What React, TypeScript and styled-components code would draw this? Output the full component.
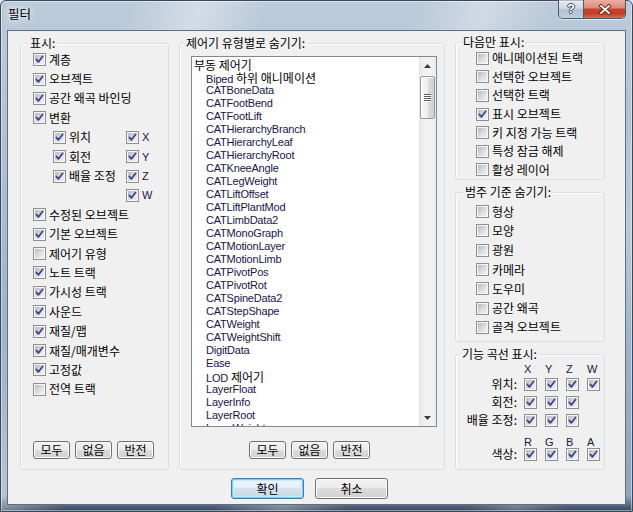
import React from "react";
import styled, { createGlobalStyle, css } from "styled-components";

const KO = `"Noto Sans CJK KR", "Noto Sans", sans-serif`;
const LATIN = `"Liberation Sans", "Noto Sans CJK KR", sans-serif`;

const GlobalStyle = createGlobalStyle`
  * { box-sizing: border-box; }
  html, body { margin: 0; padding: 0; }
  body {
    width: 633px;
    height: 512px;
    overflow: hidden;
    background: #dfe6ee;
    font-family: ${KO};
    font-size: 12px;
    color: #000;
  }
`;

const Window = styled.div`
  width: 633px;
  height: 512px;
  display: flex;
  flex-direction: column;
  padding: 0 6px 6px;
  border: 1px solid #3a4859;
  border-radius: 6px 6px 0 0;
  background:
    linear-gradient(112deg, rgba(255,255,255,0) 16%, rgba(255,255,255,.35) 24%, rgba(255,255,255,0) 32%,
      rgba(255,255,255,0) 50%, rgba(255,255,255,.3) 58%, rgba(255,255,255,0) 66%,
      rgba(255,255,255,0) 80%, rgba(255,255,255,.22) 86%, rgba(255,255,255,0) 92%),
    linear-gradient(180deg, #bccbda 0%, #aabdd0 40%, #8ea5bc 97%, #34465c 100%);
  box-shadow: inset 0 0 0 1px rgba(255,255,255,.45);
`;

const TitleBar = styled.div`
  height: 29px;
  flex: none;
  display: flex;
  align-items: flex-start;
  justify-content: space-between;
`;

const Title = styled.span`
  margin: 5px 0 0 1px;
  font-size: 12.5px;
  line-height: 16px;
  text-shadow: 0 0 5px #fff, 0 0 9px rgba(255,255,255,.9);
`;

const CaptionGroup = styled.div`
  display: flex;
  margin: -1px 0 0 0;
  border: 1px solid #4b5b6e;
  border-top: none;
  border-radius: 0 0 5px 5px;
  overflow: hidden;
  box-shadow: 0 1px 0 rgba(255,255,255,.55);
`;

const HelpButton = styled.div`
  width: 25px;
  height: 18px;
  display: grid;
  place-items: center;
  border-right: 1px solid #4b5b6e;
  background: linear-gradient(180deg, rgba(255,255,255,.6) 0%, rgba(226,233,241,.55) 45%,
    rgba(168,185,204,.6) 55%, rgba(196,210,224,.65) 100%);
  color: #fff;
  font: bold 13px/14px "Liberation Sans", sans-serif;
  text-shadow: -1px 0 #3e4c5e, 1px 0 #3e4c5e, 0 -1px #3e4c5e, 0 1px #3e4c5e;
`;

const CloseButton = styled.div`
  width: 41px;
  height: 18px;
  display: grid;
  place-items: center;
  background: linear-gradient(180deg, #eab0a2 0%, #de8b78 42%, #c8432b 52%, #c23d25 75%, #d8714f 100%);
`;

const Client = styled.div`
  flex: 1;
  display: flex;
  flex-direction: column;
  background: #f0f0f0;
  border: 1px solid #5f6f82;
`;

const Columns = styled.div`
  height: 439px;
  flex: none;
  display: grid;
  grid-template-columns: 149px 266px 150px;
  column-gap: 10px;
  padding: 12px 0 0 12px;
`;

const GroupBox = styled.div<{ $h?: number }>`
  display: flex;
  flex-direction: column;
  min-height: 0;
  border: 1px solid #d5dfe5;
  border-radius: 3px;
  box-shadow: inset 1px 1px 0 #fff;
  ${p => p.$h ? css`height: ${p.$h}px; flex: none;` : css`flex: 1;`}
`;

const Legend = styled.div<{ $indent: number }>`
  align-self: flex-start;
  margin: -8px 0 0 ${p => p.$indent}px;
  padding: 0 2px;
  background: #f0f0f0;
  font-size: 12px;
  line-height: 14px;
  white-space: nowrap;
`;

const GroupBody = styled.div<{ $pad: string }>`
  flex: 1;
  display: flex;
  flex-direction: column;
  min-height: 0;
  padding: ${p => p.$pad};
`;

const CheckRow = styled.div<{ $h: number }>`
  display: flex;
  align-items: center;
  height: ${p => p.$h}px;
`;

const CheckItem = styled.span`
  display: flex;
  align-items: center;
`;

const BoxFrame = styled.span`
  position: relative;
  flex: none;
  width: 13px;
  height: 13px;
  border: 1px solid #8e8f8f;
  background: #f6f6f6;
  &::before {
    content: "";
    position: absolute;
    left: 1px;
    top: 1px;
    width: 9px;
    height: 9px;
    background: linear-gradient(135deg, #b8bbc0 0%, #d9dadd 50%, #f4f4f4 100%);
  }
  svg {
    position: absolute;
    left: 0;
    top: 0;
  }
`;

const Label = styled.span<{ $latin?: boolean }>`
  margin-left: 3px;
  white-space: nowrap;
  font-size: 12px;
  line-height: 14px;
  ${p => p.$latin && css`
    font-family: ${LATIN};
    font-size: 11px;
    color: #16164a;
  `}
`;

const TransformGrid = styled.div`
  display: grid;
  grid-template-columns: 73px auto;
  grid-auto-rows: 19.4px;
  align-items: center;
  padding-left: 20px;
`;

const ButtonRow = styled.div<{ $indent: number }>`
  display: flex;
  gap: 5px;
  margin-top: auto;
  padding-left: ${p => p.$indent}px;
`;

const PushButton = styled.div<{ $w: number; $h: number; $primary?: boolean }>`
  width: ${p => p.$w}px;
  height: ${p => p.$h}px;
  display: grid;
  place-items: center;
  border: 1px solid #707070;
  border-radius: 3px;
  background: linear-gradient(180deg, #f2f2f2 0%, #ebebeb 49%, #dddddd 50%, #cfcfcf 100%);
  box-shadow: inset 0 0 0 1px #fbfbfb;
  font-size: 12px;
  line-height: 14px;
  ${p => p.$primary && css`
    border-color: #3c7fb1;
    box-shadow: inset 0 0 0 1px #6fd0fb, inset 0 0 0 2px #c4ecfd;
    background: linear-gradient(180deg, #eef5f9 0%, #e4eef4 49%, #d3e2eb 50%, #c7d9e4 100%);
  `}
`;

const ListBox = styled.div`
  height: 371px;
  margin-top: 6px;
  display: flex;
  background: #fff;
  border: 1px solid #828790;
`;

const ListItems = styled.div`
  flex: 1;
  overflow: hidden;
  padding: 1px 0 0 2px;
`;

const ListItem = styled.div<{ $child?: boolean }>`
  height: 13px;
  line-height: 13px;
  white-space: nowrap;
  padding-left: ${p => (p.$child ? 12 : 0)}px;
  font-family: ${LATIN};
  font-size: 11px;
  letter-spacing: -0.2px;
  color: #16164a;
`;

const Ko = styled.span`
  font-family: ${KO};
  font-size: 12px;
  line-height: 13px;
  letter-spacing: 0;
  color: #000;
`;

const ScrollBar = styled.div`
  width: 17px;
  flex: none;
  display: flex;
  flex-direction: column;
  background: linear-gradient(90deg, #e3e4e5 0%, #efefef 20%, #f3f3f3 70%, #ececec 100%);
`;

const ArrowButton = styled.div`
  height: 17px;
  flex: none;
  display: grid;
  place-items: center;
`;

const Track = styled.div`
  flex: 1;
  padding: 2px 1px 0 1px;
`;

const Thumb = styled.div`
  height: 43px;
  display: grid;
  place-items: center;
  border: 1px solid #979797;
  border-radius: 2px;
  background: linear-gradient(90deg, #f6f6f6 0%, #ededed 50%, #dcdcdc 51%, #d0d0d0 100%);
  box-shadow: inset 1px 1px 0 #fff;
`;

const RightColumn = styled.div`
  display: flex;
  flex-direction: column;
  margin-top: -1px;
  gap: 12px;
  min-height: 0;
`;

const AxisGrid = styled.div<{ $rows: string; $top: number }>`
  display: grid;
  grid-template-columns: 64px repeat(4, 21px);
  grid-template-rows: ${p => p.$rows};
  align-items: center;
  margin-top: ${p => p.$top}px;
`;

const AxisName = styled.span`
  justify-self: end;
  padding-right: 3px;
  font-size: 12px;
  line-height: 14px;
  white-space: nowrap;
`;

const AxisHead = styled.span`
  justify-self: start;
  padding-left: 4px;
  font-family: ${LATIN};
  font-size: 11px;
  line-height: 12px;
  color: #16164a;
`;

const AxisCell = styled.span`
  justify-self: center;
  display: flex;
`;

const Footer = styled.div`
  display: flex;
  gap: 11px;
  padding: 8px 0 0 223px;
`;

function Checkbox({ checked }: { checked?: boolean }) {
  return (
    <BoxFrame>
      {checked && (
        <svg width="11" height="11" viewBox="0 0 11 11">
          <path d="M2.3 5.4 L4.4 7.9 L8.7 2.3" fill="none" stroke="#33468e" strokeWidth="1.7" strokeLinecap="round" strokeLinejoin="round" />
        </svg>
      )}
    </BoxFrame>
  );
}

function Check({ label, checked, latin }: { label: string; checked?: boolean; latin?: boolean }) {
  return (
    <CheckItem>
      <Checkbox checked={checked} />
      <Label $latin={latin}>{label}</Label>
    </CheckItem>
  );
}

function MixedText({ text }: { text: string }) {
  const parts = text.split(/([\uac00-\ud7a3]+(?:\s+[\uac00-\ud7a3]+)*)/);
  return (
    <>
      {parts.map((part, i) => /[\uac00-\ud7a3]/.test(part) ? <Ko key={i}>{part}</Ko> : part)}
    </>
  );
}

const topItems: [string, boolean][] = [
  ["계층", true],
  ["오브젝트", true],
  ["공간 왜곡 바인딩", true],
  ["변환", true],
];

const bottomItems: [string, boolean][] = [
  ["수정된 오브젝트", true],
  ["기본 오브젝트", true],
  ["제어기 유형", false],
  ["노트 트랙", true],
  ["가시성 트랙", true],
  ["사운드", true],
  ["재질/맵", true],
  ["재질/매개변수", true],
  ["고정값", true],
  ["전역 트랙", false],
];

const controllers = [
  "Biped 하위 애니메이션", "CATBoneData", "CATFootBend", "CATFootLift", "CATHierarchyBranch",
  "CATHierarchyLeaf", "CATHierarchyRoot", "CATKneeAngle", "CATLegWeight", "CATLiftOffset",
  "CATLiftPlantMod", "CATLimbData2", "CATMonoGraph", "CATMotionLayer", "CATMotionLimb",
  "CATPivotPos", "CATPivotRot", "CATSpineData2", "CATStepShape", "CATWeight", "CATWeightShift",
  "DigitData", "Ease", "LOD 제어기", "LayerFloat", "LayerInfo", "LayerRoot", "LayerWeight",
];

const showOnly: [string, boolean][] = [
  ["애니메이션된 트랙", false],
  ["선택한 오브젝트", false],
  ["선택한 트랙", false],
  ["표시 오브젝트", true],
  ["키 지정 가능 트랙", false],
  ["특성 잠금 해제", false],
  ["활성 레이어", false],
];

const categories = ["형상", "모양", "광원", "카메라", "도우미", "공간 왜곡", "골격 오브젝트"];

function AxisRow({ name, count }: { name: string; count: number }) {
  return (
    <>
      <AxisName>{name}</AxisName>
      {[0, 1, 2, 3].map(i => (
        <AxisCell key={i}>{i < count && <Checkbox checked />}</AxisCell>
      ))}
    </>
  );
}

export default function App() {
  return (
    <>
      <GlobalStyle />
      <Window>
        <TitleBar>
          <Title>필터</Title>
          <CaptionGroup>
            <HelpButton>?</HelpButton>
            <CloseButton>
              <svg width="14" height="11" viewBox="0 0 14 11">
                <path d="M3 2 L11 9 M11 2 L3 9" stroke="#5b2219" strokeWidth="3.6" strokeLinecap="square" />
                <path d="M3 2 L11 9 M11 2 L3 9" stroke="#fff" strokeWidth="1.8" strokeLinecap="square" />
              </svg>
            </CloseButton>
          </CaptionGroup>
        </TitleBar>

        <Client>
          <Columns>
            <GroupBox>
              <Legend $indent={7}>표시:</Legend>
              <GroupBody $pad="0 0 10px 12px">
                {topItems.map(([label, checked]) => (
                  <CheckRow key={label} $h={19.4}>
                    <Check label={label} checked={checked} />
                  </CheckRow>
                ))}
                <TransformGrid>
                  <Check label="위치" checked />
                  <Check label="X" checked latin />
                  <Check label="회전" checked />
                  <Check label="Y" checked latin />
                  <Check label="배율 조정" checked />
                  <Check label="Z" checked latin />
                  <span />
                  <Check label="W" checked latin />
                </TransformGrid>
                {bottomItems.map(([label, checked]) => (
                  <CheckRow key={label} $h={19.4}>
                    <Check label={label} checked={checked} />
                  </CheckRow>
                ))}
                <ButtonRow $indent={-1}>
                  <PushButton $w={37} $h={18}>모두</PushButton>
                  <PushButton $w={37} $h={18}>없음</PushButton>
                  <PushButton $w={37} $h={18}>반전</PushButton>
                </ButtonRow>
              </GroupBody>
            </GroupBox>

            <GroupBox>
              <Legend $indent={4}>제어기 유형별로 숨기기:</Legend>
              <GroupBody $pad="0 7px 10px 11px">
                <ListBox>
                  <ListItems>
                    <ListItem><Ko>부동 제어기</Ko></ListItem>
                    {controllers.map(name => (
                      <ListItem key={name} $child><MixedText text={name} /></ListItem>
                    ))}
                  </ListItems>
                  <ScrollBar>
                    <ArrowButton>
                      <svg width="7" height="4" viewBox="0 0 7 4"><path d="M0 4 L3.5 0 L7 4 Z" fill="#3c3c3c" /></svg>
                    </ArrowButton>
                    <Track>
                      <Thumb>
                        <svg width="7" height="8" viewBox="0 0 7 8">
                          {[0, 2, 4, 6].map(y => (
                            <g key={y}>
                              <rect x="0" y={y} width="7" height="1" fill="#5d5d5d" />
                              <rect x="0" y={y + 1} width="7" height="1" fill="#ffffff" />
                            </g>
                          ))}
                        </svg>
                      </Thumb>
                    </Track>
                    <ArrowButton>
                      <svg width="7" height="4" viewBox="0 0 7 4"><path d="M0 0 L7 0 L3.5 4 Z" fill="#3c3c3c" /></svg>
                    </ArrowButton>
                  </ScrollBar>
                </ListBox>
                <ButtonRow $indent={58}>
                  <PushButton $w={37} $h={18}>모두</PushButton>
                  <PushButton $w={37} $h={18}>없음</PushButton>
                  <PushButton $w={37} $h={18}>반전</PushButton>
                </ButtonRow>
              </GroupBody>
            </GroupBox>

            <RightColumn>
              <GroupBox $h={138}>
                <Legend $indent={5}>다음만 표시:</Legend>
                <GroupBody $pad="0 0 0 20px">
                  {showOnly.map(([label, checked]) => (
                    <CheckRow key={label} $h={18.8}>
                      <Check label={label} checked={checked} />
                    </CheckRow>
                  ))}
                </GroupBody>
              </GroupBox>

              <GroupBox $h={150}>
                <Legend $indent={7}>범주 기준 숨기기:</Legend>
                <GroupBody $pad="3px 0 0 20px">
                  {categories.map(label => (
                    <CheckRow key={label} $h={19.3}>
                      <Check label={label} />
                    </CheckRow>
                  ))}
                </GroupBody>
              </GroupBox>

              <GroupBox>
                <Legend $indent={4}>기능 곡선 표시:</Legend>
                <GroupBody $pad="0">
                  <AxisGrid $rows="13px 18px 18px 18px" $top={1}>
                    <span />
                    <AxisHead>X</AxisHead>
                    <AxisHead>Y</AxisHead>
                    <AxisHead>Z</AxisHead>
                    <AxisHead>W</AxisHead>
                    <AxisRow name="위치:" count={4} />
                    <AxisRow name="회전:" count={3} />
                    <AxisRow name="배율 조정:" count={3} />
                  </AxisGrid>
                  <AxisGrid $rows="12px 12px" $top={7}>
                    <span />
                    <AxisHead>R</AxisHead>
                    <AxisHead>G</AxisHead>
                    <AxisHead>B</AxisHead>
                    <AxisHead>A</AxisHead>
                    <AxisRow name="색상:" count={4} />
                  </AxisGrid>
                </GroupBody>
              </GroupBox>
            </RightColumn>
          </Columns>

          <Footer>
            <PushButton $w={73} $h={21} $primary>확인</PushButton>
            <PushButton $w={73} $h={21}>취소</PushButton>
          </Footer>
        </Client>
      </Window>
    </>
  );
}
